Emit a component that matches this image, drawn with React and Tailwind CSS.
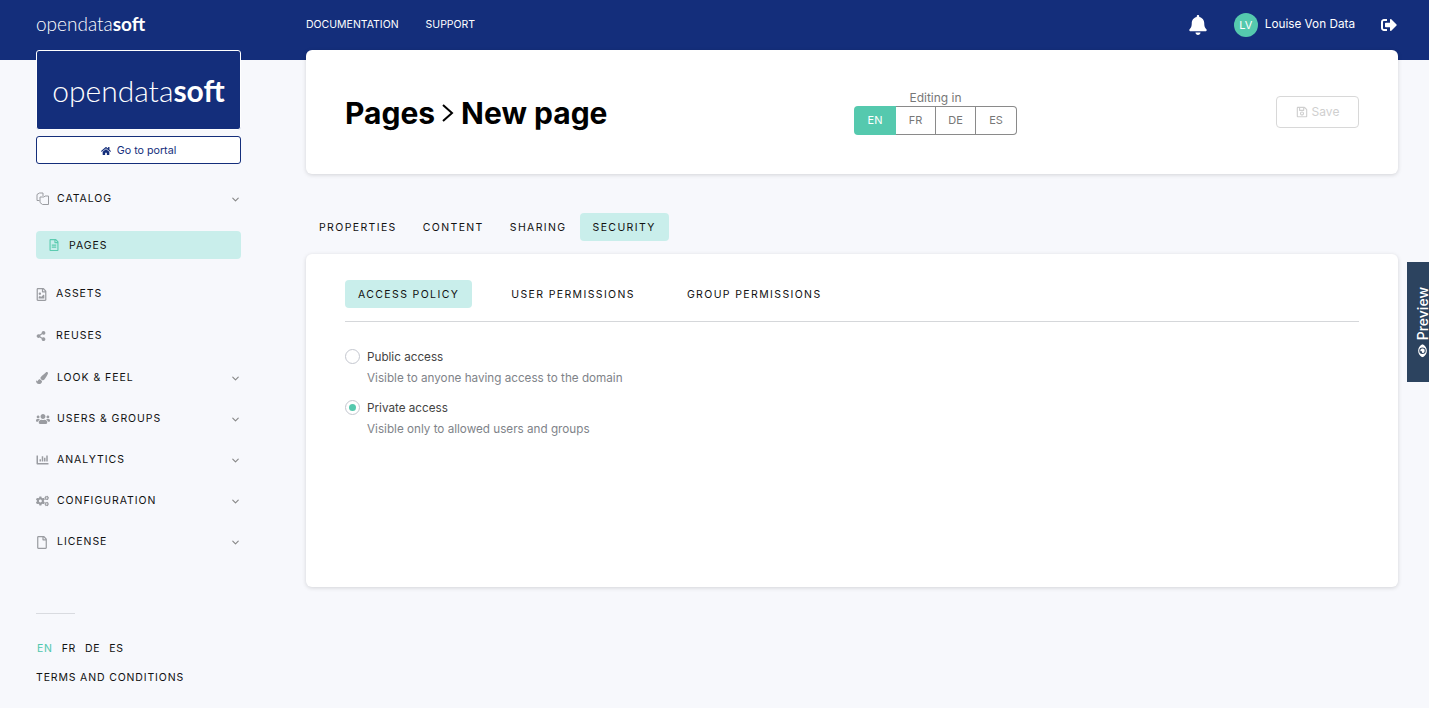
import React from 'react';
import { ChevronDown } from 'lucide-react';
import {
  FaHome, FaBell, FaSignOutAlt, FaRegSave, FaRegFileAlt, FaRegFileImage, FaShareAlt,
  FaPaintBrush, FaUsers, FaChartBar, FaCogs, FaRegFile, FaEye,
} from 'react-icons/fa';

// two overlapping sheets, no match in the icon packs
const CatalogIcon = ({ className }) => (
  <svg className={className} viewBox="0 0 13 13" fill="none" stroke="currentColor" strokeWidth="1">
    <path d="M3.5 8.5H1V2.5L3.5 1H7V4" />
    <path d="M4 5h4l1-1h3.5v8.5H6.5L4 10.5z" />
  </svg>
);

const navItems = [
  { label: 'CATALOG', icon: CatalogIcon, iconCls: 'w-[13px] h-[13px] -mt-[2px]', gap: 'ml-[8px]', chevron: true, cls: 'mt-[28px] mb-[25px]' },
  { label: 'PAGES', icon: FaRegFileAlt, active: true, cls: 'mb-[28px]' },
  { label: 'ASSETS', icon: FaRegFileImage, iconCls: 'w-[11px] h-[13px]', gap: 'ml-[9px]', cls: 'mb-[28px]' },
  { label: 'REUSES', icon: FaShareAlt, iconCls: 'w-[10px] h-[10px]', gap: 'ml-[10px]', cls: 'mb-[28px]' },
  { label: 'LOOK & FEEL', icon: FaPaintBrush, iconCls: 'w-[12px] h-[12px]', gap: 'ml-[9px]', chevron: true, cls: 'mb-[27px]' },
  { label: 'USERS & GROUPS', icon: FaUsers, iconCls: 'w-[14px] h-[14px]', gap: 'ml-[7px]', chevron: true, cls: 'mb-[27px]' },
  { label: 'ANALYTICS', icon: FaChartBar, iconCls: 'w-[13px] h-[12px]', gap: 'ml-[8px]', chevron: true, cls: 'mb-[27px]' },
  { label: 'CONFIGURATION', icon: FaCogs, iconCls: 'w-[13px] h-[12px]', gap: 'ml-[8px]', chevron: true, cls: 'mb-[27px]' },
  { label: 'LICENSE', icon: FaRegFile, iconCls: 'w-[12px] h-[13px]', gap: 'ml-[9px]', chevron: true, cls: '' },
];

const Logo = ({ className }) => (
  <span className={`font-['Lato',sans-serif] font-light ${className}`}>
    opendata<span className="font-bold">soft</span>
  </span>
);

const NavItem = ({ item }) => {
  const Icon = item.icon;
  if (item.active) {
    return (
      <div className={`flex items-center h-[28px] rounded bg-[#c9eeeb] pl-[13px] ${item.cls}`}>
        <Icon className="w-[10px] h-[12px] text-[#5ccbb0]" />
        <span className="ml-[10px] pt-px text-[10.5px] tracking-[0.95px] text-[#111]">{item.label}</span>
      </div>
    );
  }
  return (
    <div className={`flex items-center h-[14px] ${item.cls}`}>
      <Icon className={`${item.iconCls} text-[#9a9ca1]`} />
      <span className={`${item.gap} text-[10.5px] tracking-[0.95px] text-[#111]`}>{item.label}</span>
      {item.chevron && <ChevronDown className="ml-auto w-[11px] h-[11px] text-[#888]" strokeWidth={2.5} />}
    </div>
  );
};

const Sidebar = () => (
  <aside className="w-[205px] shrink-0 -mt-[10px]">
    <div className="h-[80px] rounded-[3px] border border-white bg-[#142e7b] flex items-center justify-center">
      <Logo className="text-[30px] leading-none text-white" />
    </div>
    <div className="mt-[6px] h-[28px] pt-[2px] rounded-[3px] border border-[#142e7b] bg-white flex items-center justify-center gap-[6px] text-[10.7px] text-[#142e7b]">
      <FaHome className="w-[10px] h-[10px]" />
      Go to portal
    </div>
    <nav>
      {navItems.map((item) => <NavItem key={item.label} item={item} />)}
    </nav>
    <div className="mt-[64px] w-[39px] h-px bg-[#d9dbe0]" />
    <div className="mt-[28px] pl-px flex gap-[9px] text-[10.5px] leading-[14px] tracking-[0.7px] text-[#111]">
      <span className="text-[#4fc7ad]">EN</span>
      <span>FR</span>
      <span>DE</span>
      <span>ES</span>
    </div>
    <div className="mt-[15px] text-[10.5px] leading-[14px] tracking-[0.85px] text-[#111]">TERMS AND CONDITIONS</div>
  </aside>
);

const Radio = ({ checked, label, hint, className }) => (
  <div className={className}>
    <div className="flex items-center gap-[7px]">
      <span className="w-[15px] h-[15px] rounded-full border border-[#c4c7cf] bg-white flex items-center justify-center">
        {checked && <span className="w-[7px] h-[7px] rounded-full bg-[#55c9ae]" />}
      </span>
      <span className="pt-px text-[11.7px] leading-[16px] text-[#444]">{label}</span>
    </div>
    <div className="mt-[5px] ml-[22px] text-[11.7px] leading-[16px] text-[#808389]">{hint}</div>
  </div>
);

export default function App() {
  return (
    <div className="relative min-h-[708px] overflow-hidden bg-[#f7f8fc] font-['Inter',sans-serif]">
      {/* Top bar */}
      <header className="h-[60px] bg-[#142e7b] flex items-center pb-[10px] pl-[36px] pr-[32px] text-white">
        <Logo className="w-[270px] text-[19px] leading-none -mt-[4px]" />
        <a className="text-[10.5px]">DOCUMENTATION</a>
        <a className="ml-[27px] text-[10.5px]">SUPPORT</a>
        <FaBell className="ml-auto w-[20px] h-[20px]" />
        <span className="ml-[26px] w-[24px] h-[24px] rounded-full bg-[#55c9ae] flex items-center justify-center text-[11px]">LV</span>
        <span className="ml-[7px] text-[11.75px]">Louise Von Data</span>
        <FaSignOutAlt className="ml-[26px] w-[16px] h-[16px]" />
      </header>

      <div className="flex pl-[36px] pr-[31px]">
        <Sidebar />
        <main className="flex-1 ml-[65px] -mt-[10px]">
          <section className="h-[124px] rounded-md bg-white shadow-[0_1px_4px_rgba(0,0,0,0.15)] flex items-center pl-[39px] pr-[39px]">
            <h1 className="mt-[2px] w-[509px] text-[30px] font-bold text-black flex items-center">
              Pages
              <svg className="ml-[6px] mr-[7px] w-[13px] h-[20px]" viewBox="0 0 13 20" fill="none" stroke="#000" strokeWidth="2"><path d="M2 2l9 8-9 8" /></svg>
              New page
            </h1>
            <div className="flex flex-col items-center mt-[1px]">
              <div className="mb-[2px] text-[12px] leading-[13px] text-[#777]">Editing in</div>
              <div className="flex h-[29px] text-[11px] text-[#777]">
                <span className="w-[42px] rounded-l bg-[#55c9ae] text-white flex items-center justify-center">EN</span>
                <span className="w-[40px] border-y border-r border-[#8a8a8a] flex items-center justify-center">FR</span>
                <span className="w-[40px] border-y border-r border-[#8a8a8a] flex items-center justify-center">DE</span>
                <span className="w-[41px] rounded-r border-y border-r border-[#8a8a8a] flex items-center justify-center">ES</span>
              </div>
            </div>
            <button className="ml-auto w-[83px] h-[32px] rounded border border-[#d8d8d8] flex items-center justify-center gap-[4px] text-[12px] text-[#cfcfcf]">
              <FaRegSave className="w-[12px] h-[12px]" />
              Save
            </button>
          </section>

          <div className="mt-[39px] flex text-[10.5px] tracking-[1.38px] text-[#111]">
            <span className="h-[28px] px-[13px] pt-px flex items-center">PROPERTIES</span>
            <span className="h-[28px] px-[13px] pt-px flex items-center">CONTENT</span>
            <span className="h-[28px] px-[13px] pt-px flex items-center">SHARING</span>
            <span className="h-[28px] px-[13px] pt-px flex items-center rounded bg-[#c9eeeb]">SECURITY</span>
          </div>

          <section className="mt-[13px] h-[333px] rounded-md bg-white shadow-[0_1px_4px_rgba(0,0,0,0.15)] px-[39px] pt-[26px]">
            <div className="flex text-[10.5px] tracking-[1.38px] text-[#111] border-b border-[#d5d7da] h-[42px]">
              <span className="h-[28px] px-[13px] pt-px flex items-center rounded bg-[#c9eeeb]">ACCESS POLICY</span>
              <span className="ml-[39px] h-[28px] pt-px flex items-center">USER PERMISSIONS</span>
              <span className="ml-[52px] h-[28px] pt-px flex items-center">GROUP PERMISSIONS</span>
            </div>
            <Radio className="mt-[26px]" label="Public access" hint="Visible to anyone having access to the domain" />
            <Radio className="mt-[13px]" checked label="Private access" hint="Visible only to allowed users and groups" />
          </section>
        </main>
      </div>

      {/* Preview tab */}
      <div className="absolute right-0 top-[262px] w-[22px] h-[120px] bg-[#2c435f] text-white flex flex-col items-start justify-center pl-[9px]">
        <span className="[writing-mode:vertical-rl] rotate-180 flex items-center gap-[4px] text-[14px] font-medium leading-[12px]">
          <FaEye className="w-[13px] h-[13px] rotate-90" />
          Preview
        </span>
      </div>
    </div>
  );
}
